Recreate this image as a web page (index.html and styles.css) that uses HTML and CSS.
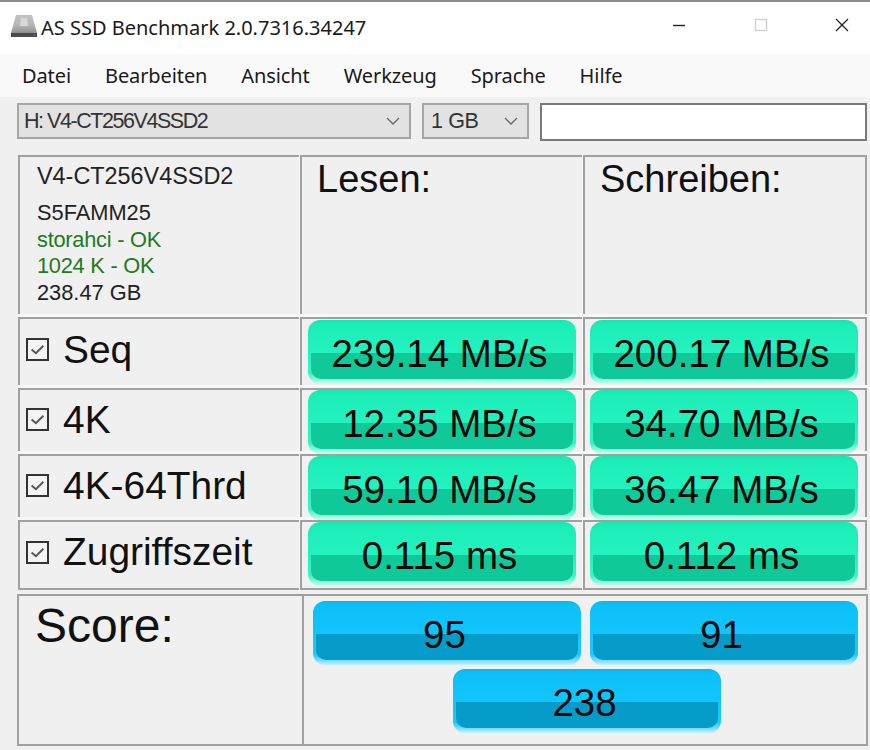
FILE: index.html
```html
<!DOCTYPE html>
<html lang="de">
<head>
<meta charset="utf-8">
<title>AS SSD Benchmark</title>
<link rel="stylesheet" href="styles.css">
</head>
<body>
<div class="window">
  <header class="titlebar">
    <svg class="app-icon" width="28" height="24" viewBox="0 0 28 24">
      <defs>
        <linearGradient id="drive" x1="0" y1="0" x2="0" y2="1">
          <stop offset="0" stop-color="#c4c4c4"/>
          <stop offset="0.6" stop-color="#b4b4b4"/>
          <stop offset="1" stop-color="#909090"/>
        </linearGradient>
      </defs>
      <path d="M6 1H22L27 19H1Z" fill="url(#drive)"/>
      <path d="M1 19H27V23H1Z" fill="#4a4a4a"/>
      <path d="M11 4H17L18 12H10Z" fill="#d8d8d8"/>
      <path d="M23 20H26V22H23Z" fill="#5a50a8"/>
    </svg>
    <span class="title">AS SSD Benchmark 2.0.7316.34247</span>
    <div class="controls">
      <svg class="ctl" width="14" height="14" viewBox="0 0 14 14"><path d="M1 7.5H13" stroke="#222" stroke-width="1.4"/></svg>
      <svg class="ctl" width="14" height="14" viewBox="0 0 14 14"><rect x="1.5" y="1.5" width="11" height="11" fill="none" stroke="#cfcfcf" stroke-width="1.4"/></svg>
      <svg class="ctl" width="14" height="14" viewBox="0 0 14 14"><path d="M1 1L13 13M13 1L1 13" stroke="#222" stroke-width="1.3" fill="none"/></svg>
    </div>
  </header>
  <nav class="menubar">
    <span>Datei</span><span>Bearbeiten</span><span>Ansicht</span><span>Werkzeug</span><span>Sprache</span><span>Hilfe</span>
  </nav>
  <div class="toolbar">
    <div class="select drive-select"><span>H: V4-CT256V4SSD2</span>
      <svg width="14" height="8" viewBox="0 0 14 8"><path d="M1 1L7 7L13 1" fill="none" stroke="#666" stroke-width="1.3"/></svg></div>
    <div class="select size-select"><span>1 GB</span>
      <svg width="14" height="8" viewBox="0 0 14 8"><path d="M1 1L7 7L13 1" fill="none" stroke="#666" stroke-width="1.3"/></svg></div>
    <div class="textbox"></div>
  </div>
  <main class="results">
    <div class="cell info">
      <div class="drive-name">V4-CT256V4SSD2</div>
      <div class="line">S5FAMM25</div>
      <div class="line ok">storahci - OK</div>
      <div class="line ok">1024 K - OK</div>
      <div class="line">238.47 GB</div>
    </div>
    <div class="cell heading">Lesen:</div>
    <div class="cell heading end">Schreiben:</div>

    <div class="cell label first"><span class="check"><svg width="15" height="13" viewBox="0 0 14 12"><path d="M1.5 6L5.5 9.5L12.5 2.5" fill="none" stroke="#555" stroke-width="1.8"/></svg></span>Seq</div>
    <div class="cell value first"><div class="pill green">239.14 MB/s</div></div>
    <div class="cell value end first"><div class="pill green">200.17 MB/s</div></div>

    <div class="cell label"><span class="check"><svg width="15" height="13" viewBox="0 0 14 12"><path d="M1.5 6L5.5 9.5L12.5 2.5" fill="none" stroke="#555" stroke-width="1.8"/></svg></span>4K</div>
    <div class="cell value"><div class="pill green">12.35 MB/s</div></div>
    <div class="cell value end"><div class="pill green">34.70 MB/s</div></div>

    <div class="cell label"><span class="check"><svg width="15" height="13" viewBox="0 0 14 12"><path d="M1.5 6L5.5 9.5L12.5 2.5" fill="none" stroke="#555" stroke-width="1.8"/></svg></span>4K-64Thrd</div>
    <div class="cell value"><div class="pill green">59.10 MB/s</div></div>
    <div class="cell value end"><div class="pill green">36.47 MB/s</div></div>

    <div class="cell label last"><span class="check"><svg width="15" height="13" viewBox="0 0 14 12"><path d="M1.5 6L5.5 9.5L12.5 2.5" fill="none" stroke="#555" stroke-width="1.8"/></svg></span>Zugriffszeit</div>
    <div class="cell value last"><div class="pill green">0.115 ms</div></div>
    <div class="cell value end last"><div class="pill green">0.112 ms</div></div>
  </main>
  <section class="score">
    <div class="score-label">Score:</div>
    <div class="score-values">
      <div class="pill blue">95</div>
      <div class="pill blue">91</div>
      <div class="pill blue total">238</div>
    </div>
  </section>
</div>
</body>
</html>
```
FILE: styles.css
```css
* { box-sizing: border-box; }
html, body { margin: 0; padding: 0; }
body { width: 870px; height: 750px; overflow: hidden; background: #f0f0f0; font-family: "Liberation Sans", Arial, sans-serif; color: #111; }
.window { display: flex; flex-direction: column; height: 750px; border-top: 2px solid #8c8c8c; }

.titlebar { height: 52px; background: #fff; display: flex; align-items: center; padding: 0 21px 0 10px; }
.app-icon { flex: none; margin-right: 3px; margin-bottom: 4px; }
.title { font-family: "Noto Sans", sans-serif; font-size: 20px; color: #1a1a1a; white-space: nowrap; margin-bottom: 2px; }
.controls { margin-left: auto; display: flex; gap: 67.5px; margin-bottom: 6px; }

.menubar { height: 43px; background: #f9f9f9; display: flex; align-items: center; gap: 34px; padding: 0 22px 1px; font-family: "Noto Sans", sans-serif; font-size: 20px; letter-spacing: -0.1px; color: #1a1a1a; }

.toolbar { display: flex; gap: 11px; padding: 6px 3px 0 17px; height: 50px; }
.select { height: 36px; background: #e2e2e2; border: 2px solid #a6a6a6; display: flex; align-items: center; justify-content: space-between; padding: 0 9px 0 5px; font-size: 21.5px; letter-spacing: -1.45px; color: #333; }
.drive-select { width: 394px; }
.size-select { width: 107px; padding-left: 7px; letter-spacing: -0.4px; }
.textbox { flex: 1; height: 38px; background: #fff; border: 2px solid #7a7a7a; }

.results { margin: 8px 3px 0 18px; display: grid; grid-template-columns: 281px 282px 284px; grid-template-rows: 159px 68px 63px 63px 70px; gap: 3px 1px; background: #f7f7f7; }
.cell { border-top: 2px solid #a0a0a0; border-left: 2px solid #a0a0a0; background: #f0f0f0; }
.cell.end { border-right: 2px solid #a0a0a0; }
.cell.last { border-bottom: 2px solid #a0a0a0; }

.info { padding: 4px 0 0 17px; }
.drive-name { font-size: 23.4px; line-height: 30px; margin-bottom: 9px; color: #222; }
.line { font-size: 21.8px; line-height: 26.6px; color: #222; }
.ok { color: #217a21; letter-spacing: -0.25px; }

.heading { font-size: 38px; line-height: 44px; padding: 0 0 0 15px; color: #111; }

.label { display: flex; align-items: center; font-size: 38.9px; padding: 0 0 2px 6px; color: #111; }
.label.first { padding-bottom: 5px; }
.label.last { padding-bottom: 6px; }
.check { flex: none; width: 23px; height: 23px; border: 2px solid #333; background: #f4f4f4; margin-right: 14px; display: flex; align-items: center; justify-content: center; }

.value { padding: 0 0 0 6px; }
.value.first { padding-top: 1px; }
.value.end { padding-left: 5px; }

.pill { position: relative; isolation: isolate; width: 268px; height: 64px; border-radius: 12px; display: flex; align-items: center; justify-content: center; padding: 3px 5px 0 0; font-size: 38.5px; color: #0a0a0a; }
.pill::before { content: ""; position: absolute; z-index: -1; left: 3px; right: 3px; top: 33px; bottom: 5px; border-radius: 0 0 10px 10px; filter: blur(0.7px); }
.green { background: linear-gradient(#19e6b0 0, #1ceeb8 8%, #24f2be 52%, #3ef2c6 84%, #cdfcee 100%); }
.green::before { background: #10c998; }
.blue { background: linear-gradient(#08b8f0 0, #0cc0f8 8%, #12c6fd 52%, #22c8fa 84%, #c4f0fe 100%); }
.blue::before { background: #059cca; }

.score { margin: 4px 2px 0 17px; height: 152px; display: grid; grid-template-columns: 283px 1fr; border: 2px solid #a0a0a0; }
.score-label { font-size: 48px; padding: 3px 0 0 16px; line-height: 54px; color: #111; }
.score-values { border-left: 2px solid #a0a0a0; padding: 5px 0 0 9px; display: grid; grid-template-columns: 268px 268px; column-gap: 9px; row-gap: 4px; align-content: start; }
.total { grid-column: 1 / 3; justify-self: center; margin-left: 3px; }
```
